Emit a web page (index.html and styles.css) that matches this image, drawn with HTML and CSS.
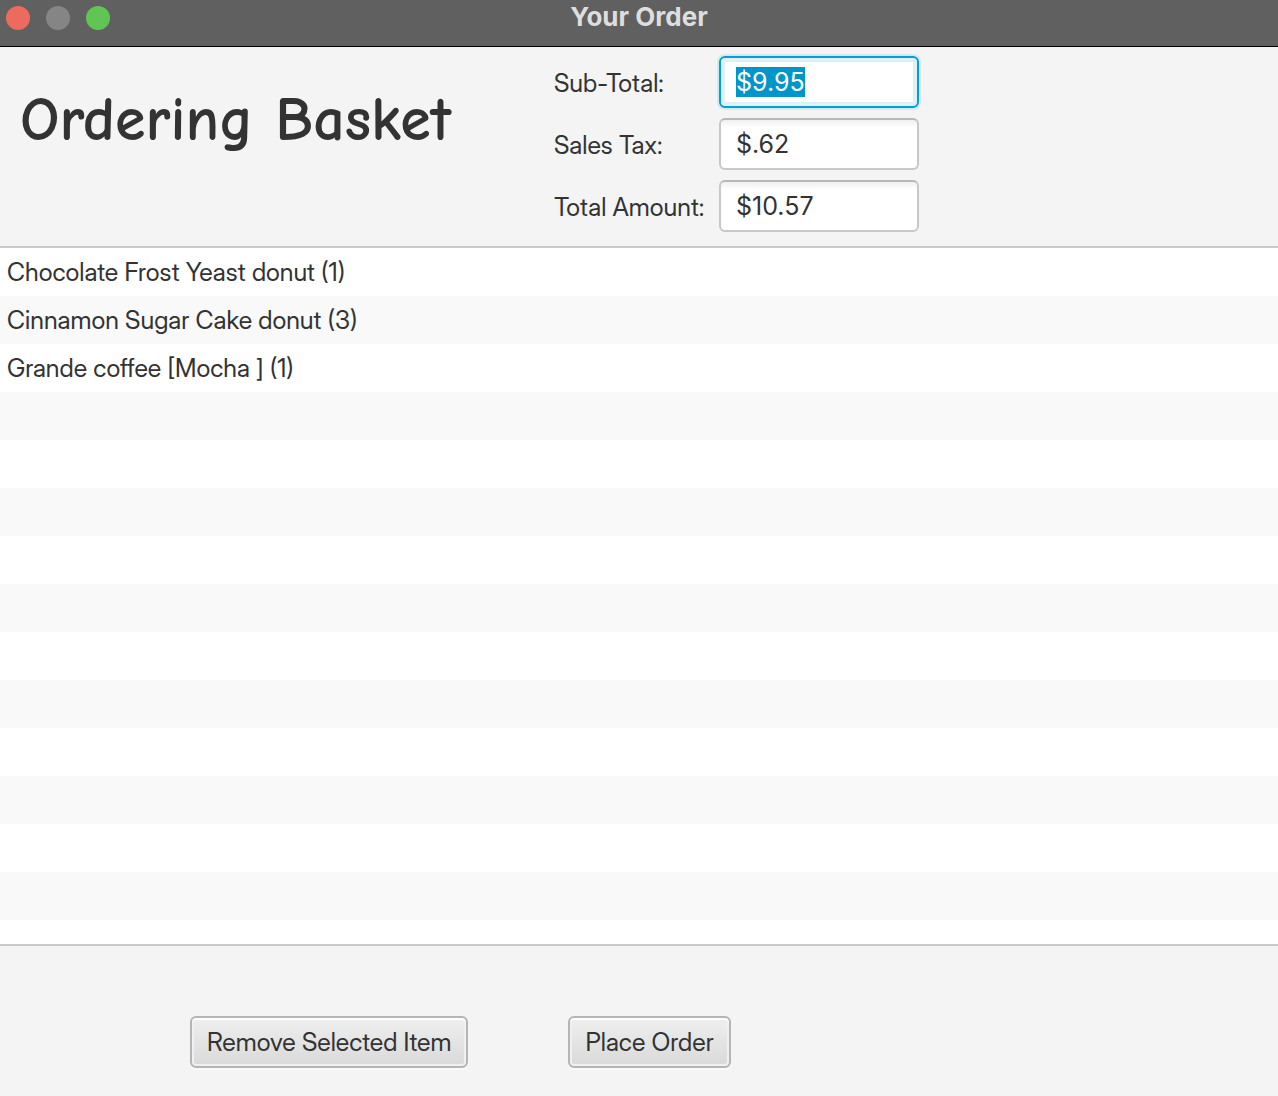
FILE: index.html
```html
<!DOCTYPE html>
<html lang="en">
<head>
<meta charset="utf-8">
<title>Your Order</title>
<link rel="stylesheet" href="styles.css">
</head>
<body>
<div class="window">
  <header class="titlebar">
    <div class="controls">
      <button class="dot dot-close" type="button" aria-label="Close"></button>
      <button class="dot dot-minimize" type="button" aria-label="Minimize" disabled></button>
      <button class="dot dot-zoom" type="button" aria-label="Zoom"></button>
    </div>
    <div class="window-title">Your Order</div>
  </header>
  <main class="content">
    <section class="summary">
      <h1 class="heading">Ordering Basket</h1>
      <div class="totals">
        <label for="subtotal">Sub-Total:</label>
        <input class="field" id="subtotal" type="text" value="$9.95" readonly>
        <label for="tax">Sales Tax:</label>
        <input class="field" id="tax" type="text" value="$.62" readonly>
        <label for="total">Total Amount:</label>
        <input class="field" id="total" type="text" value="$10.57" readonly>
      </div>
    </section>
    <ul class="items">
      <li>Chocolate Frost Yeast donut (1)</li>
      <li>Cinnamon Sugar Cake donut (3)</li>
      <li>Grande coffee [Mocha ] (1)</li>
    </ul>
  </main>
  <footer class="actions">
    <button class="button" type="button">Remove Selected Item</button>
    <button class="button" type="button">Place Order</button>
  </footer>
</div>
<script src="script.js"></script>
</body>
</html>
```
FILE: styles.css
```css
* {
  box-sizing: border-box;
}

body {
  margin: 0;
  background: #f4f4f4;
  color: #333;
  font-family: "Inter Display", Inter, "Liberation Sans", sans-serif;
  font-size: 25px;
  line-height: 34px;
}

.window {
  display: flex;
  flex-direction: column;
  min-height: 100vh;
}

.titlebar {
  display: grid;
  grid-template-columns: 1fr auto 1fr;
  align-items: start;
  height: 47px;
  padding: 0 6px;
  background: #606060;
  border-bottom: 1px solid #000;
}

.controls {
  display: flex;
  gap: 16px;
  padding-top: 6px;
}

.dot {
  width: 24px;
  height: 24px;
  padding: 0;
  border: 0;
  border-radius: 50%;
}

.dot-close {
  background: #ed6a5e;
}

.dot-minimize {
  background: #858585;
}

.dot-zoom {
  background: #61c554;
}

.window-title {
  color: #dedede;
  font-family: Inter, sans-serif;
  font-size: 26px;
  font-weight: 700;
}

.content {
  display: flex;
  flex: 1;
  flex-direction: column;
}

.summary {
  display: flex;
  gap: 20px;
  padding: 9px 20px 14px;
}

.heading {
  flex: 0 0 514px;
  margin: 0;
  padding-top: 28px;
  font-family: "Comic Neue", "Comic Sans MS", cursive;
  font-size: 62px;
  font-weight: 700;
  line-height: 72px;
}

.totals {
  display: grid;
  grid-template-columns: minmax(153px, auto) 200px;
  column-gap: 12px;
  row-gap: 10px;
  align-items: center;
}

.totals label {
  padding-top: 2px;
}

.field {
  width: 100%;
  height: 52px;
  padding: 0 15px;
  border: 2px solid #c8c8c8;
  border-top-color: #b8b8b8;
  border-radius: 6px;
  outline: 0;
  background: linear-gradient(#f0f0f0, #fff 8px);
  color: #333;
  font: inherit;
  font-family: Inter, sans-serif;
}

.field:focus {
  border-color: #039ed3;
  background: #fff;
  box-shadow: 0 0 0 2px #d3e9f1, inset 0 0 0 4px #def1f9;
}

.field::selection {
  background: #0096c9;
  color: #fff;
}

.items {
  flex: 1;
  margin: 0;
  padding: 0;
  border-top: 2px solid #c8c8c8;
  border-bottom: 2px solid #c8c8c8;
  background: repeating-linear-gradient(#fff 0 48px, #f9f9f9 48px 96px);
  list-style: none;
}

.items li {
  padding: 7px;
}

.actions {
  display: flex;
  gap: 100px;
  padding: 70px 190px 28px;
}

.button {
  height: 52px;
  padding: 0 15px;
  border: 2px solid #b5b5b5;
  border-radius: 6px;
  background: linear-gradient(#efefef, #d9d9d9);
  box-shadow: 0 2px 0 #fafafa, inset 0 2px 0 #fff, inset 0 0 0 2px #f0f0f0;
  color: #333;
  font: inherit;
}
```
FILE: script.js
```js
const subtotal = document.getElementById("subtotal");
subtotal.focus();
subtotal.select();
```
